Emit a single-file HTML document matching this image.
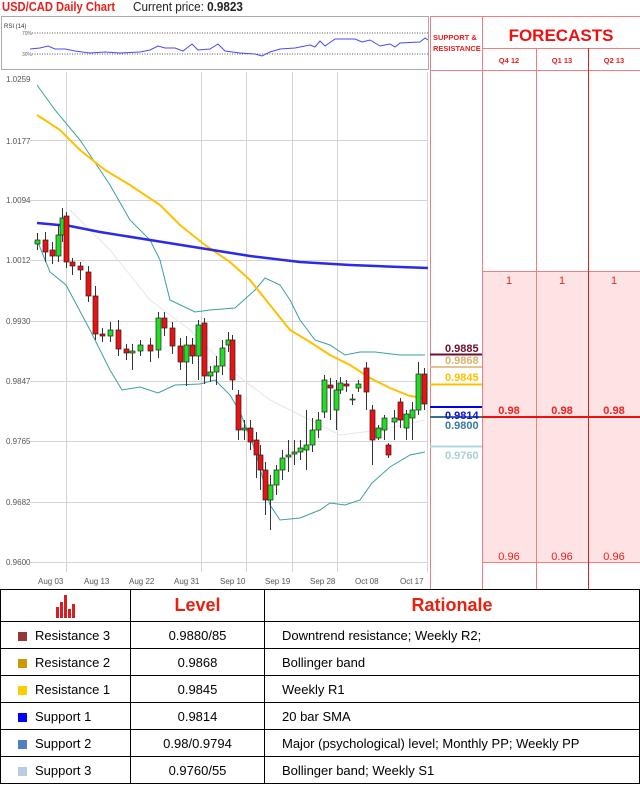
<!DOCTYPE html>
<html><head><meta charset="utf-8"><style>
body{margin:0;width:640px;height:786px;background:#fff;font-family:"Liberation Sans",sans-serif;position:relative;overflow:hidden}
.abs{position:absolute}
table{border-collapse:collapse;position:absolute;left:0;top:589px;width:640px}
td{border:1px solid #000;font-size:13px;height:26px;padding:0}
.sq{display:inline-block;width:9px;height:9px;margin:0 8px 0 17px;vertical-align:-1px}
.c{text-align:center}
.g rect{stroke:#222;stroke-width:.7}
.g line{stroke:#333}
</style></head><body>
<div class="abs" style="left:2px;top:-1px;font-size:13px;font-weight:bold;color:#e8201c;transform:scaleX(0.86);transform-origin:0 0;white-space:nowrap">USD/CAD Daily Chart</div>
<div class="abs" style="left:133px;top:-1px;font-size:13px;color:#222;transform:scaleX(0.9);transform-origin:0 0;white-space:nowrap">Current price: <b>0.9823</b></div>
<svg class="abs" style="left:0;top:0" width="640" height="590">
<rect x="1.5" y="16.5" width="427" height="53" fill="#fff" stroke="#aaa"/>
<text x="4" y="28" font-size="6" fill="#333">RSI (14)</text>
<text x="22" y="35" font-size="5" fill="#666">70%</text><text x="22" y="56" font-size="5" fill="#666">30%</text>
<line x1="32" y1="33" x2="428" y2="33" stroke="#555" stroke-dasharray="1,1.5"/>
<line x1="32" y1="54" x2="428" y2="54" stroke="#555" stroke-dasharray="1,1.5"/>
<polyline fill="none" stroke="#4a4af0" stroke-width="1" points="30,49 40,48 48,46 55,49 65,49 75,51 90,53 105,52 120,53 140,52 150,50 158,46 165,48 175,48 183,51 192,44 198,50 210,49 218,44 225,51 240,53 255,54 262,56 270,52 280,49 295,48 310,45 315,47 320,41 325,46 335,39 355,39 362,42 370,40 380,46 390,44 395,47 400,43 420,42 425,38 428,40"/>
<g stroke="#d4d4d4" stroke-width="1">
<line x1="30" y1="140.5" x2="428" y2="140.5"/><line x1="30" y1="200.5" x2="428" y2="200.5"/><line x1="30" y1="260.5" x2="428" y2="260.5"/><line x1="30" y1="321.5" x2="428" y2="321.5"/><line x1="30" y1="381.5" x2="428" y2="381.5"/><line x1="30" y1="441.5" x2="428" y2="441.5"/><line x1="30" y1="502.5" x2="428" y2="502.5"/><line x1="30" y1="562.5" x2="428" y2="562.5"/>
<line x1="66.5" y1="72" x2="66.5" y2="572"/><line x1="201.5" y1="72" x2="201.5" y2="572"/><line x1="246.5" y1="72" x2="246.5" y2="572"/><line x1="292.5" y1="72" x2="292.5" y2="572"/><line x1="337.5" y1="72" x2="337.5" y2="572"/><line x1="427.5" y1="72" x2="427.5" y2="572"/>
</g>
<g font-size="8" fill="#555">
<text x="6" y="82">1.0259</text><text x="6" y="144">1.0177</text><text x="6" y="203">1.0094</text><text x="6" y="263">1.0012</text><text x="6" y="324">0.9930</text><text x="6" y="384">0.9847</text><text x="6" y="444">0.9765</text><text x="6" y="505">0.9682</text><text x="6" y="565">0.9600</text>
<text x="38" y="584">Aug 03</text><text x="84" y="584">Aug 13</text><text x="129" y="584">Aug 22</text><text x="174" y="584">Aug 31</text><text x="220" y="584">Sep 10</text><text x="265" y="584">Sep 19</text><text x="310" y="584">Sep 28</text><text x="355" y="584">Oct 08</text><text x="400" y="584">Oct 17</text>
</g>
<polyline fill="none" stroke="#e6e6e6" points="70,210 110,250 150,300 190,330 230,370 270,400 300,415 340,435 380,430 425,420"/>
<polyline fill="none" stroke="#3aa0a0" points="37,85 55,110 80,140 110,185 130,220 150,240 160,260 170,300 195,312 210,310 235,308 255,290 265,278 280,285 290,300 300,320 315,340 330,345 345,355 360,352 375,352 400,355 425,355"/>
<polyline fill="none" stroke="#3aa0a0" points="37,240 50,272 66,285 90,330 110,370 122,390 140,387 158,393 175,385 200,384 215,380 230,395 240,412 255,450 270,505 280,520 300,518 320,510 330,503 345,505 360,500 372,483 390,467 410,455 425,452"/>
<polyline fill="none" stroke="#ffc000" stroke-width="2" points="37,115 60,130 80,150 105,170 130,185 160,205 180,225 205,245 230,262 250,280 270,305 290,330 310,342 330,355 350,365 370,378 390,388 410,396 425,398"/>
<polyline fill="none" stroke="#2a2ae8" stroke-width="2.5" points="37,223 70,226 100,232 150,240 200,248 250,256 300,262 350,265 400,267 428,268"/>
<g class="g">
<line x1="37.5" y1="233" x2="37.5" y2="250"/><rect x="35" y="240" width="5" height="4" fill="#2d2"/>
<line x1="45.5" y1="232" x2="45.5" y2="262"/><rect x="43" y="240" width="5" height="12" fill="#e11"/>
<line x1="52.5" y1="242" x2="52.5" y2="264"/><rect x="50" y="250" width="5" height="6" fill="#e11"/>
<line x1="58.5" y1="225" x2="58.5" y2="262"/><rect x="56" y="235" width="5" height="21" fill="#2d2"/>
<line x1="62.5" y1="208" x2="62.5" y2="242"/><rect x="60" y="218" width="5" height="17" fill="#2d2"/>
<line x1="66.5" y1="212" x2="66.5" y2="268"/><rect x="64" y="216" width="5" height="46" fill="#e11"/>
<line x1="72.5" y1="258" x2="72.5" y2="275"/><rect x="70" y="262" width="5" height="4" fill="#e11"/>
<line x1="80.5" y1="262" x2="80.5" y2="280"/><rect x="78" y="266" width="5" height="4" fill="#e11"/>
<line x1="88.5" y1="266" x2="88.5" y2="302"/><rect x="86" y="272" width="5" height="24" fill="#e11"/>
<line x1="95.5" y1="286" x2="95.5" y2="340"/><rect x="93" y="296" width="5" height="38" fill="#e11"/>
<line x1="102.5" y1="328" x2="102.5" y2="342"/><rect x="100" y="334" width="5" height="2" fill="#e11"/>
<line x1="110.5" y1="322" x2="110.5" y2="342"/><rect x="108" y="330" width="5" height="6" fill="#2d2"/>
<line x1="118.5" y1="320" x2="118.5" y2="356"/><rect x="116" y="330" width="5" height="19" fill="#e11"/>
<line x1="126.5" y1="344" x2="126.5" y2="360"/><rect x="124" y="349" width="5" height="4" fill="#e11"/>
<line x1="132.5" y1="344" x2="132.5" y2="370"/><rect x="130" y="351" width="5" height="2" fill="#2d2"/>
<line x1="140.5" y1="340" x2="140.5" y2="356"/><rect x="138" y="345" width="5" height="6" fill="#2d2"/>
<line x1="150.5" y1="338" x2="150.5" y2="362"/><rect x="148" y="345" width="5" height="6" fill="#e11"/>
<line x1="158.5" y1="312" x2="158.5" y2="358"/><rect x="156" y="318" width="5" height="32" fill="#2d2"/>
<line x1="164.5" y1="312" x2="164.5" y2="336"/><rect x="162" y="318" width="5" height="10" fill="#e11"/>
<line x1="172.5" y1="322" x2="172.5" y2="354"/><rect x="170" y="328" width="5" height="18" fill="#e11"/>
<line x1="180.5" y1="338" x2="180.5" y2="370"/><rect x="178" y="346" width="5" height="16" fill="#e11"/>
<line x1="186.5" y1="336" x2="186.5" y2="386"/><rect x="184" y="345" width="5" height="17" fill="#2d2"/>
<line x1="192.5" y1="338" x2="192.5" y2="364"/><rect x="190" y="345" width="5" height="11" fill="#e11"/>
<line x1="198.5" y1="320" x2="198.5" y2="380"/><rect x="196" y="325" width="5" height="31" fill="#2d2"/>
<line x1="204.5" y1="318" x2="204.5" y2="384"/><rect x="202" y="323" width="5" height="53" fill="#e11"/>
<line x1="210.5" y1="366" x2="210.5" y2="382"/><rect x="208" y="372" width="5" height="4" fill="#2d2"/>
<line x1="216.5" y1="356" x2="216.5" y2="385"/><rect x="214" y="366" width="5" height="6" fill="#2d2"/>
<line x1="222.5" y1="340" x2="222.5" y2="375"/><rect x="220" y="348" width="5" height="18" fill="#2d2"/>
<line x1="228.5" y1="332" x2="228.5" y2="352"/><rect x="226" y="340" width="5" height="5" fill="#2d2"/>
<line x1="232.5" y1="335" x2="232.5" y2="390"/><rect x="230" y="340" width="5" height="40" fill="#e11"/>
<line x1="238.5" y1="390" x2="238.5" y2="440"/><rect x="236" y="395" width="5" height="35" fill="#e11"/>
<line x1="244.5" y1="420" x2="244.5" y2="440"/><rect x="242" y="428" width="5" height="2" fill="#2d2"/>
<line x1="250.5" y1="420" x2="250.5" y2="450"/><rect x="248" y="428" width="5" height="14" fill="#e11"/>
<line x1="256.5" y1="432" x2="256.5" y2="478"/><rect x="254" y="440" width="5" height="15" fill="#e11"/>
<line x1="260.5" y1="445" x2="260.5" y2="490"/><rect x="258" y="455" width="5" height="15" fill="#e11"/>
<line x1="265.5" y1="462" x2="265.5" y2="515"/><rect x="263" y="470" width="5" height="30" fill="#e11"/>
<line x1="270.5" y1="475" x2="270.5" y2="530"/><rect x="268" y="485" width="5" height="15" fill="#2d2"/>
<line x1="276.5" y1="465" x2="276.5" y2="495"/><rect x="274" y="470" width="5" height="15" fill="#2d2"/>
<line x1="282.5" y1="450" x2="282.5" y2="480"/><rect x="280" y="458" width="5" height="12" fill="#2d2"/>
<line x1="288.5" y1="440" x2="288.5" y2="472"/><rect x="286" y="455" width="5" height="2" fill="#2d2"/>
<line x1="294.5" y1="440" x2="294.5" y2="465"/><rect x="292" y="452" width="5" height="2" fill="#2d2"/>
<line x1="300.5" y1="440" x2="300.5" y2="460"/><rect x="298" y="448" width="5" height="4" fill="#2d2"/>
<line x1="306.5" y1="410" x2="306.5" y2="470"/><rect x="304" y="445" width="5" height="5" fill="#2d2"/>
<line x1="312.5" y1="418" x2="312.5" y2="452"/><rect x="310" y="430" width="5" height="15" fill="#2d2"/>
<line x1="318.5" y1="412" x2="318.5" y2="438"/><rect x="316" y="420" width="5" height="10" fill="#2d2"/>
<line x1="324.5" y1="375" x2="324.5" y2="418"/><rect x="322" y="380" width="5" height="32" fill="#2d2"/>
<line x1="330.5" y1="378" x2="330.5" y2="420"/><rect x="328" y="385" width="5" height="3" fill="#e11"/>
<line x1="336.5" y1="380" x2="336.5" y2="430"/><rect x="334" y="390" width="5" height="20" fill="#2d2"/>
<line x1="340.5" y1="377" x2="340.5" y2="394"/><rect x="338" y="383" width="5" height="7" fill="#2d2"/>
<line x1="346.5" y1="380" x2="346.5" y2="392"/><rect x="344" y="384" width="5" height="2" fill="#e11"/>
<line x1="352.5" y1="394" x2="352.5" y2="405"/><rect x="350" y="399" width="5" height="1" fill="#2d2"/>
<line x1="358.5" y1="380" x2="358.5" y2="392"/><rect x="356" y="384" width="5" height="4" fill="#2d2"/>
<line x1="366.5" y1="362" x2="366.5" y2="410"/><rect x="364" y="368" width="5" height="24" fill="#e11"/>
<line x1="372.5" y1="405" x2="372.5" y2="465"/><rect x="370" y="410" width="5" height="30" fill="#e11"/>
<line x1="378.5" y1="425" x2="378.5" y2="440"/><rect x="376" y="428" width="5" height="10" fill="#2d2"/>
<line x1="384.5" y1="415" x2="384.5" y2="440"/><rect x="382" y="418" width="5" height="12" fill="#2d2"/>
<line x1="388.5" y1="443" x2="388.5" y2="458"/><rect x="386" y="445" width="5" height="10" fill="#e11"/>
<line x1="394.5" y1="410" x2="394.5" y2="440"/><rect x="392" y="418" width="5" height="4" fill="#2d2"/>
<line x1="400.5" y1="398" x2="400.5" y2="428"/><rect x="398" y="402" width="5" height="18" fill="#e11"/>
<line x1="406.5" y1="410" x2="406.5" y2="440"/><rect x="404" y="414" width="5" height="14" fill="#2d2"/>
<line x1="412.5" y1="402" x2="412.5" y2="440"/><rect x="410" y="410" width="5" height="8" fill="#2d2"/>
<line x1="418.5" y1="362" x2="418.5" y2="415"/><rect x="416" y="374" width="5" height="36" fill="#2d2"/>
<line x1="424.5" y1="368" x2="424.5" y2="410"/><rect x="422" y="374" width="5" height="30" fill="#e11"/>
</g>
<rect x="482" y="271" width="158" height="291" fill="#fde3e3"/>
<g stroke="#f08080" stroke-width="1">
<line x1="430.5" y1="16" x2="430.5" y2="590"/><line x1="482.5" y1="16" x2="482.5" y2="590"/><line x1="536.5" y1="48" x2="536.5" y2="590"/><line x1="430" y1="16.5" x2="640" y2="16.5"/><line x1="482" y1="48.5" x2="640" y2="48.5"/><line x1="430" y1="70.5" x2="640" y2="70.5"/><line x1="482" y1="271.5" x2="640" y2="271.5"/><line x1="482" y1="562.5" x2="640" y2="562.5"/>
</g>
<line x1="588.5" y1="48" x2="588.5" y2="590" stroke="#e02020"/>
<line x1="482" y1="417" x2="640" y2="417" stroke="#ee1111" stroke-width="2"/>
<text x="433" y="40" font-size="7.5" font-weight="bold" fill="#e82020">SUPPORT &amp;</text>
<text x="433" y="51" font-size="7.5" font-weight="bold" fill="#e82020">RESISTANCE</text>
<text x="561" y="41" font-size="17" font-weight="bold" fill="#ee1111" text-anchor="middle">FORECASTS</text>
<g font-size="7.5" font-weight="bold" fill="#e82020" text-anchor="middle"><text x="509" y="63">Q4 12</text><text x="562" y="63">Q1 13</text><text x="614" y="63">Q2 13</text></g>
<g font-size="11" fill="#ee2020" text-anchor="middle"><text x="509" y="284">1</text><text x="562" y="284">1</text><text x="614" y="284">1</text><text x="509" y="560">0.96</text><text x="562" y="560">0.96</text><text x="614" y="560">0.96</text></g>
<g font-size="11" font-weight="bold" fill="#ee2020" text-anchor="middle"><text x="509" y="414">0.98</text><text x="562" y="414">0.98</text><text x="614" y="414">0.98</text></g>
<g font-size="11" font-weight="bold">
<line x1="430" y1="354.5" x2="482" y2="354.5" stroke="#6b1030" stroke-width="2"/><text x="445" y="352" fill="#6b1030">0.9885</text>
<line x1="430" y1="367" x2="482" y2="367" stroke="#d9b26f" stroke-width="1.5"/><text x="445" y="364" fill="#d9b26f">0.9868</text>
<line x1="430" y1="384.5" x2="482" y2="384.5" stroke="#ffc000" stroke-width="2"/><text x="445" y="381" fill="#ffc000">0.9845</text>
<line x1="430" y1="407" x2="482" y2="407" stroke="#0000ee" stroke-width="2"/>
<line x1="430" y1="417" x2="482" y2="417" stroke="#3a7090" stroke-width="2"/><text x="445" y="419" fill="#1010e0">0.9814</text><text x="445" y="429" fill="#3a7aa0">0.9800</text>
<line x1="430" y1="446.5" x2="482" y2="446.5" stroke="#b0dada" stroke-width="2"/><text x="445" y="459" fill="#a8d0d0">0.9760</text>
</g>
</svg>
<table>
<tr style="height:31px"><td style="width:129px;height:31px" class="c"><svg width="22" height="26" style="vertical-align:middle"><g fill="#d42020"><rect x="1" y="14" width="3" height="11"/><rect x="5" y="9" width="3" height="16"/><rect x="9" y="2" width="3" height="23"/><rect x="13" y="16" width="3" height="9"/><rect x="17" y="11" width="3" height="14"/></g></svg></td>
<td style="width:133px;font-size:18px;font-weight:bold;color:#e82010" class="c">Level</td>
<td style="font-size:18px;font-weight:bold;color:#e82010" class="c">Rationale</td></tr>
<tr><td><span class="sq" style="background:#953735"></span>Resistance 3</td><td class="c">0.9880/85</td><td style="padding-left:17px">Downtrend resistance; Weekly R2;</td></tr>
<tr><td><span class="sq" style="background:#cc9900"></span>Resistance 2</td><td class="c">0.9868</td><td style="padding-left:17px">Bollinger band</td></tr>
<tr><td><span class="sq" style="background:#ffcc00"></span>Resistance 1</td><td class="c">0.9845</td><td style="padding-left:17px">Weekly R1</td></tr>
<tr><td><span class="sq" style="background:#0000ff"></span>Support 1</td><td class="c">0.9814</td><td style="padding-left:17px">20 bar SMA</td></tr>
<tr><td><span class="sq" style="background:#4f81bd"></span>Support 2</td><td class="c">0.98/0.9794</td><td style="padding-left:17px">Major (psychological) level; Monthly PP; Weekly PP</td></tr>
<tr><td><span class="sq" style="background:#b8cce4"></span>Support 3</td><td class="c">0.9760/55</td><td style="padding-left:17px">Bollinger band; Weekly S1</td></tr>
</table>
</body></html>
